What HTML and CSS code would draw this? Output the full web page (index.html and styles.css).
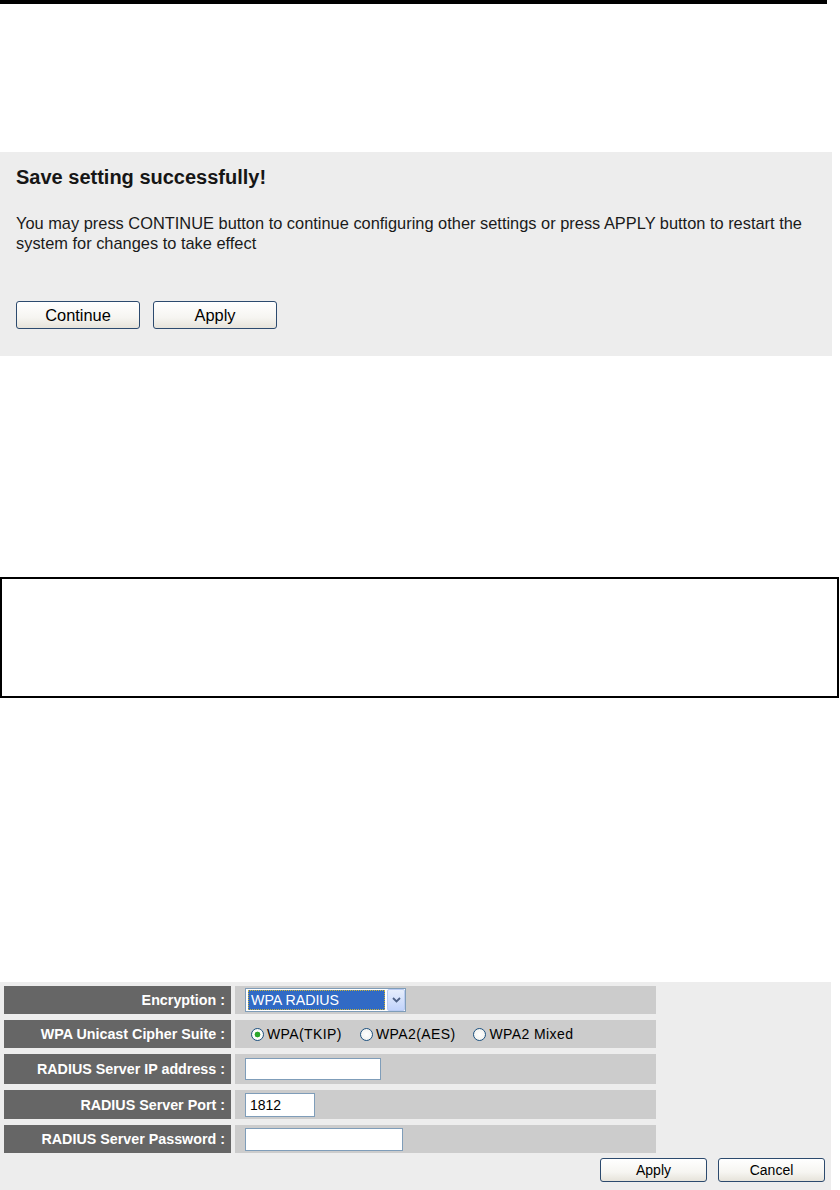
FILE: index.html
```html
<!DOCTYPE html>
<html lang="en">
<head>
<meta charset="utf-8">
<title>Save setting</title>
<link rel="stylesheet" href="styles.css">
</head>
<body>
<div class="topbar"></div>

<section class="save-box">
  <h2 class="save-title">Save setting successfully!</h2>
  <p class="save-text">You may press CONTINUE button to continue configuring other settings or press APPLY button to restart the system for changes to take effect</p>
  <div class="save-actions">
    <button class="xp-btn xp-btn-big" type="button">Continue</button>
    <button class="xp-btn xp-btn-big" type="button">Apply</button>
  </div>
</section>

<div class="note-box"></div>

<section class="form-panel">
  <div class="form-grid">
    <div class="lbl">Encryption :</div>
    <div class="val">
      <div class="select">
        <span class="select-value">WPA RADIUS</span>
        <span class="select-btn">
          <svg width="9" height="6" viewBox="0 0 9 6"><path d="M1 1 L4.5 4.5 L8 1" fill="none" stroke="#4d6185" stroke-width="1.8"/></svg>
        </span>
      </div>
    </div>

    <div class="lbl">WPA Unicast Cipher Suite :</div>
    <div class="val">
      <label class="radio"><input type="radio" name="cipher" checked>WPA(TKIP)</label>
      <label class="radio"><input type="radio" name="cipher">WPA2(AES)</label>
      <label class="radio"><input type="radio" name="cipher">WPA2 Mixed</label>
    </div>

    <div class="lbl">RADIUS Server IP address :</div>
    <div class="val"><input class="text-input w-ip" type="text" value=""></div>

    <div class="lbl">RADIUS Server Port :</div>
    <div class="val"><input class="text-input w-port" type="text" value="1812"></div>

    <div class="lbl">RADIUS Server Password :</div>
    <div class="val"><input class="text-input w-pass" type="password" value=""></div>
  </div>
  <div class="form-actions">
    <button class="xp-btn xp-btn-small" type="button">Apply</button>
    <button class="xp-btn xp-btn-small" type="button">Cancel</button>
  </div>
</section>
</body>
</html>
```

FILE: styles.css
```css
* {
  box-sizing: border-box;
}

body {
  margin: 0;
  background: #ffffff;
  color: #000000;
  font-family: "Liberation Sans", Arial, sans-serif;
}

.topbar {
  width: 827px;
  height: 4px;
  background: #000000;
}

/* ---------- save box ---------- */
.save-box {
  margin-top: 148px;
  width: 832px;
  height: 204px;
  background: #ededed;
  padding: 13px 16px 0 16px;
}

.save-title {
  margin: 0;
  font-size: 20px;
  line-height: 24px;
  font-weight: bold;
  color: #161616;
}

.save-text {
  margin: 24px 0 0 0;
  font-size: 16.4px;
  line-height: 20px;
  color: #1a1a1a;
}

.save-actions {
  margin-top: 48px;
  display: flex;
  gap: 13px;
}

/* ---------- XP style buttons ---------- */
.xp-btn {
  font-family: inherit;
  color: #000000;
  border: 1px solid #2c4a6e;
  border-radius: 3px;
  background: linear-gradient(#ffffff 0%, #f6f5f1 60%, #e6e3da 100%);
  padding: 0;
  cursor: default;
}

.xp-btn-big {
  width: 124px;
  height: 28px;
  font-size: 16.4px;
}

.xp-btn-small {
  width: 107px;
  height: 24px;
  font-size: 14px;
}

/* ---------- empty framed box ---------- */
.note-box {
  margin-top: 221px;
  width: 839px;
  height: 121px;
  border: 2px solid #000000;
}

/* ---------- form panel ---------- */
.form-panel {
  margin-top: 284px;
  width: 831px;
  background: #ededed;
  padding: 4px 6px 8px 4px;
}

.form-grid {
  display: grid;
  grid-template-columns: 227px 421px;
  grid-template-rows: 28px 28px 30px 29px 28px;
  column-gap: 4px;
  row-gap: 6px;
}

.lbl {
  background: #666666;
  color: #ffffff;
  font-weight: bold;
  font-size: 14.3px;
  text-align: right;
  padding-right: 6px;
  display: flex;
  align-items: center;
  justify-content: flex-end;
}

.val {
  background: #cccccc;
  padding-left: 10px;
  display: flex;
  align-items: center;
  font-size: 14px;
}

/* fake select */
.select {
  width: 161px;
  height: 24px;
  border: 1px solid #7f9db9;
  background: #ffffff;
  display: flex;
  align-items: center;
  padding: 0 0 0 2px;
}

.select-value {
  flex: 1;
  height: 20px;
  margin-right: 2px;
  background: #316ac5;
  color: #ffffff;
  font-size: 14.2px;
  line-height: 18px;
  padding-left: 2px;
  border: 1px dotted #c8b23a;
}

.select-btn {
  width: 18px;
  height: 22px;
  border: 1px solid #b9cbf2;
  border-radius: 2px;
  background: linear-gradient(#e6eefc, #c1d3fb);
  display: flex;
  align-items: center;
  justify-content: center;
}

/* radios */
.radio {
  display: inline-flex;
  align-items: center;
  margin-right: 18px;
  color: #000000;
  letter-spacing: 0.4px;
}

.radio input {
  appearance: none;
  -webkit-appearance: none;
  width: 13px;
  height: 13px;
  margin: 0 3px 0 6px;
  border: 1px solid #1c5180;
  border-radius: 50%;
  background: radial-gradient(circle at 50% 50%, #ffffff 0, #eeeeea 100%);
}

.radio + .radio input {
  margin-left: 0;
}

.radio input:checked {
  background: radial-gradient(circle at 50% 50%, #2aa52a 0, #2aa52a 2.6px, #ffffff 3.2px, #eeeeea 100%);
}

/* text inputs */
.text-input {
  height: 23px;
  border: 1px solid #7f9db9;
  background: #ffffff;
  padding: 0 4px;
  font-family: inherit;
  font-size: 14px;
  color: #000000;
  outline: none;
}

.w-ip {
  width: 136px;
  height: 22px;
}

.w-port {
  width: 70px;
  height: 24px;
}

.w-pass {
  width: 158px;
}

.form-actions {
  margin-top: 5px;
  display: flex;
  justify-content: flex-end;
  gap: 11px;
}
```
